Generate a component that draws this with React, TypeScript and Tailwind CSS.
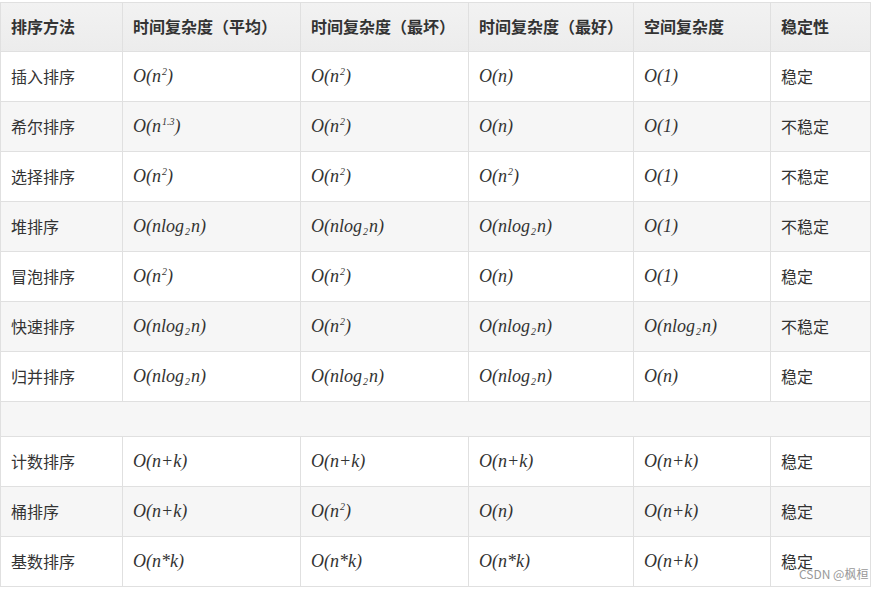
import type { ReactNode } from 'react';

const N2 = (
  <>
    O(n<sup className="text-[10px] -top-[7px] ml-[1px]">2</sup>)
  </>
);
const N13 = (
  <>
    O(n<sup className="text-[10px] -top-[7px] ml-[1px]">1.3</sup>)
  </>
);
const NLOG = (
  <>
    O(nlog<sub className="text-[10px] top-[3px] mx-[1px]">2</sub>n)
  </>
);

type Row = { name: string; cells: ReactNode[]; stable: string } | null;

const rows: Row[] = [
  { name: '插入排序', cells: [N2, N2, 'O(n)', 'O(1)'], stable: '稳定' },
  { name: '希尔排序', cells: [N13, N2, 'O(n)', 'O(1)'], stable: '不稳定' },
  { name: '选择排序', cells: [N2, N2, N2, 'O(1)'], stable: '不稳定' },
  { name: '堆排序', cells: [NLOG, NLOG, NLOG, 'O(1)'], stable: '不稳定' },
  { name: '冒泡排序', cells: [N2, N2, 'O(n)', 'O(1)'], stable: '稳定' },
  { name: '快速排序', cells: [NLOG, N2, NLOG, NLOG], stable: '不稳定' },
  { name: '归并排序', cells: [NLOG, NLOG, NLOG, 'O(n)'], stable: '稳定' },
  null,
  { name: '计数排序', cells: ['O(n+k)', 'O(n+k)', 'O(n+k)', 'O(n+k)'], stable: '稳定' },
  { name: '桶排序', cells: ['O(n+k)', N2, 'O(n)', 'O(n+k)'], stable: '稳定' },
  { name: '基数排序', cells: ['O(n*k)', 'O(n*k)', 'O(n*k)', 'O(n+k)'], stable: '稳定' },
];

const headers = ['排序方法', '时间复杂度（平均）', '时间复杂度（最坏）', '时间复杂度（最好）', '空间复杂度', '稳定性'];
const widths = ['w-[122px]', 'w-[178px]', 'w-[168px]', 'w-[165px]', 'w-[137px]', 'w-[100px]'];

const cjk = "font-['Noto_Sans_CJK_SC','Noto_Sans',sans-serif]";
const math = "font-['Liberation_Serif','DejaVu_Serif',serif] italic text-[18px]";

export default function App() {
  return (
    <div className="relative w-[881px] h-[590px] bg-white text-[#333] overflow-hidden">
      <table className="table-fixed border-collapse mt-[2px] w-[871px]">
        <colgroup>
          {widths.map((w, i) => (
            <col key={i} className={w} />
          ))}
        </colgroup>
        <thead>
          <tr className="h-[49px] bg-gradient-to-b from-[#f2f2f2] to-[#ececec]">
            {headers.map((h) => (
              <th key={h} className={`border border-[#e0e0e0] px-[10px] pb-[2px] text-left text-[16px] font-bold text-[#333] ${cjk}`}>
                {h}
              </th>
            ))}
          </tr>
        </thead>
        <tbody>
          {rows.map((r, i) =>
            r === null ? (
              <tr key={i} className="h-[35px] bg-[#f6f6f6]">
                <td colSpan={6} className="border border-[#e0e0e0]" />
              </tr>
            ) : (
              <tr key={i} className={`h-[50px] ${i % 2 === 1 ? 'bg-[#f6f6f6]' : 'bg-white'}`}>
                <td className={`border border-[#e0e0e0] px-[10px] pb-[2px] text-[16px] ${cjk}`}>{r.name}</td>
                {r.cells.map((c, j) => (
                  <td key={j} className={`border border-[#e0e0e0] px-[10px] ${math} text-[#333]`}>
                    {c}
                  </td>
                ))}
                <td className={`border border-[#e0e0e0] px-[10px] pb-[2px] text-[16px] ${cjk}`}>{r.stable}</td>
              </tr>
            )
          )}
        </tbody>
      </table>
      {/* watermark */}
      <span className={`absolute left-[799px] top-[568px] text-[12px] leading-none text-[#999] ${cjk}`}>CSDN @枫桓</span>
    </div>
  );
}
